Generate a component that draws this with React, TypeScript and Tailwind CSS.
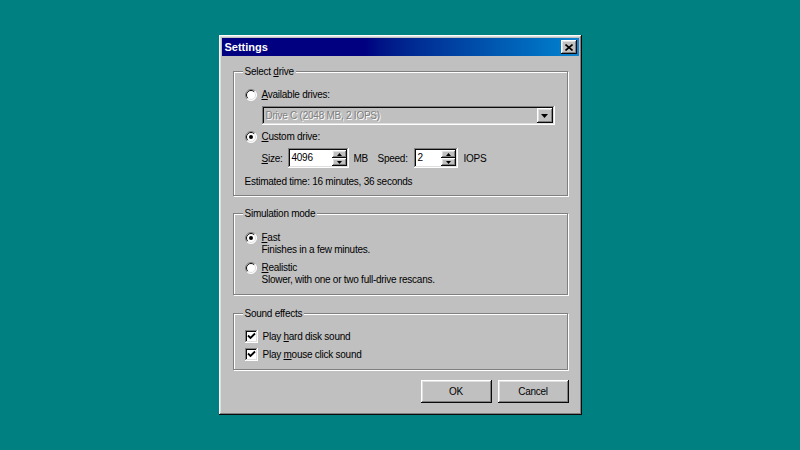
import React from "react";

const raised =
  "shadow-[inset_-1px_-1px_#0a0a0a,inset_1px_1px_#ffffff,inset_-2px_-2px_#808080,inset_2px_2px_#dfdfdf]";
const sunken =
  "shadow-[inset_-1px_-1px_#ffffff,inset_1px_1px_#808080,inset_-2px_-2px_#dfdfdf,inset_2px_2px_#0a0a0a]";
const etched = "border border-[#808080] shadow-[inset_1px_1px_#ffffff,1px_1px_#ffffff]";

function Radio({ checked }: { checked?: boolean }) {
  return (
    <svg width="12" height="12" viewBox="0 0 12 12" className="shrink-0">
      <circle cx="6" cy="6" r="5.5" fill="#ffffff" />
      <path d="M2.1 9.9 A5.5 5.5 0 0 1 9.9 2.1" fill="none" stroke="#808080" strokeWidth="1" />
      <path d="M9.9 2.1 A5.5 5.5 0 0 1 2.1 9.9" fill="none" stroke="#ffffff" strokeWidth="1" />
      <path d="M2.8 9.2 A4.5 4.5 0 0 1 9.2 2.8" fill="none" stroke="#0a0a0a" strokeWidth="1" />
      <path d="M9.2 2.8 A4.5 4.5 0 0 1 2.8 9.2" fill="none" stroke="#dfdfdf" strokeWidth="1" />
      {checked && <circle cx="6" cy="6" r="2" fill="#000000" />}
    </svg>
  );
}

function Checkbox() {
  return (
    <div className={`w-[13px] h-[13px] bg-white shrink-0 flex items-center justify-center ${sunken}`}>
      <svg width="9" height="9" viewBox="0 0 9 9">
        <path d="M1 3.5 L3.5 6 L8 1.5" fill="none" stroke="#000000" strokeWidth="1.8" />
      </svg>
    </div>
  );
}

function Spinner() {
  return (
    <div className="flex flex-col w-[15px] shrink-0">
      <div className={`h-[8px] bg-[#c0c0c0] flex items-center justify-center ${raised}`}>
        <svg width="5" height="3" viewBox="0 0 5 3">
          <path d="M2.5 0 L5 3 L0 3 Z" fill="#000000" />
        </svg>
      </div>
      <div className={`h-[8px] bg-[#c0c0c0] flex items-center justify-center ${raised}`}>
        <svg width="5" height="3" viewBox="0 0 5 3">
          <path d="M0 0 L5 0 L2.5 3 Z" fill="#000000" />
        </svg>
      </div>
    </div>
  );
}

function NumberField({ value, width }: { value: string; width: string }) {
  return (
    <div className={`${width} h-[20px] bg-white p-[2px] flex ${sunken}`}>
      <span className="flex-1 pl-[2px] leading-[16px] text-black">{value}</span>
      <Spinner />
    </div>
  );
}

export default function App(): React.JSX.Element {
  return (
    <div
      className="w-[800px] h-[450px] bg-[#008080] flex items-center justify-center text-[10px] tracking-[-0.25px] text-black"
      style={{ fontFamily: '"Liberation Sans", Arial, sans-serif' }}
    >
      <div className={`w-[363px] h-[380px] bg-[#c0c0c0] p-[3px] flex flex-col ${raised}`}>
        {/* title bar */}
        <div className="h-[18px] flex items-center justify-between pl-[3px] pr-[2px] bg-linear-to-r from-[#000080] from-40% to-[#1084d0]">
          <span className="text-white font-bold text-[11px] tracking-normal">Settings</span>
          <div className={`w-[16px] h-[14px] bg-[#c0c0c0] flex items-center justify-center ${raised}`}>
            <svg width="8" height="7" viewBox="0 0 8 7">
              <path d="M0.5 0.5 L7.5 6.5 M7.5 0.5 L0.5 6.5" stroke="#000000" strokeWidth="1.6" />
            </svg>
          </div>
        </div>

        <div className="flex flex-col pl-[11px] pt-[9px] leading-[13px]">
          {/* Select drive */}
          <fieldset className={`w-[335px] ${etched} pl-[11px] pt-[10px] pb-[7px]`}>
            <legend className="px-[2px] -ml-[2px] bg-[#c0c0c0] leading-[13px]">
              Select <u>d</u>rive
            </legend>
            <div className="flex items-center gap-[5px] h-[13px]">
              <Radio />
              <span>
                <u>A</u>vailable drives:
              </span>
            </div>
            <div className={`ml-[17px] mt-[5px] w-[293px] h-[19px] bg-[#c0c0c0] p-[2px] flex ${sunken}`}>
              <span className="flex-1 pl-[2px] leading-[15px] text-[#808080] [text-shadow:1px_1px_#ffffff]">
                Drive C (2048 MB, 2 IOPS)
              </span>
              <div className={`w-[16px] h-[15px] flex items-center justify-center ${raised}`}>
                <svg width="7" height="4" viewBox="0 0 7 4">
                  <path d="M0 0 L7 0 L3.5 4 Z" fill="#000000" />
                </svg>
              </div>
            </div>
            <div className="flex items-center gap-[5px] h-[13px] mt-[5px]">
              <Radio checked />
              <span>
                <u>C</u>ustom drive:
              </span>
            </div>
            <div className="flex items-center ml-[17px] mt-[5px] h-[20px]">
              <span className="w-[26px]">
                <u>S</u>ize:
              </span>
              <NumberField value="4096" width="w-[61px]" />
              <span className="ml-[5px] w-[24px]">MB</span>
              <span className="w-[36px]">Speed:</span>
              <NumberField value="2" width="w-[44px]" />
              <span className="ml-[6px]">IOPS</span>
            </div>
            <div className="mt-[7px] h-[13px]">Estimated time: 16 minutes, 36 seconds</div>
          </fieldset>

          {/* Simulation mode */}
          <fieldset className={`w-[335px] mt-[11px] ${etched} pl-[11px] pt-[12px] pb-[8px]`}>
            <legend className="px-[2px] -ml-[2px] bg-[#c0c0c0] leading-[13px]">Simulation mode</legend>
            <div className="flex gap-[5px] leading-[12px]">
              <div>
                <Radio checked />
              </div>
              <div className="flex flex-col">
                <span>
                  <u>F</u>ast
                </span>
                <span>Finishes in a few minutes.</span>
              </div>
            </div>
            <div className="flex gap-[5px] leading-[12px] mt-[6px]">
              <div>
                <Radio />
              </div>
              <div className="flex flex-col">
                <span>
                  <u>R</u>ealistic
                </span>
                <span>Slower, with one or two full-drive rescans.</span>
              </div>
            </div>
          </fieldset>

          {/* Sound effects */}
          <fieldset className={`w-[335px] mt-[12px] ${etched} pl-[11px] pt-[10px] pb-[8px]`}>
            <legend className="px-[2px] -ml-[2px] bg-[#c0c0c0] leading-[13px]">Sound effects</legend>
            <div className="flex items-center gap-[5px] h-[13px]">
              <Checkbox />
              <span>
                Play <u>h</u>ard disk sound
              </span>
            </div>
            <div className="flex items-center gap-[5px] h-[13px] mt-[5px]">
              <Checkbox />
              <span>
                Play <u>m</u>ouse click sound
              </span>
            </div>
          </fieldset>

          <div className="flex justify-end gap-[6px] w-[336px] mt-[10px]">
            <button className={`w-[71px] h-[23px] bg-[#c0c0c0] ${raised}`}>OK</button>
            <button className={`w-[71px] h-[23px] bg-[#c0c0c0] ${raised}`}>Cancel</button>
          </div>
        </div>
      </div>
    </div>
  );
}
